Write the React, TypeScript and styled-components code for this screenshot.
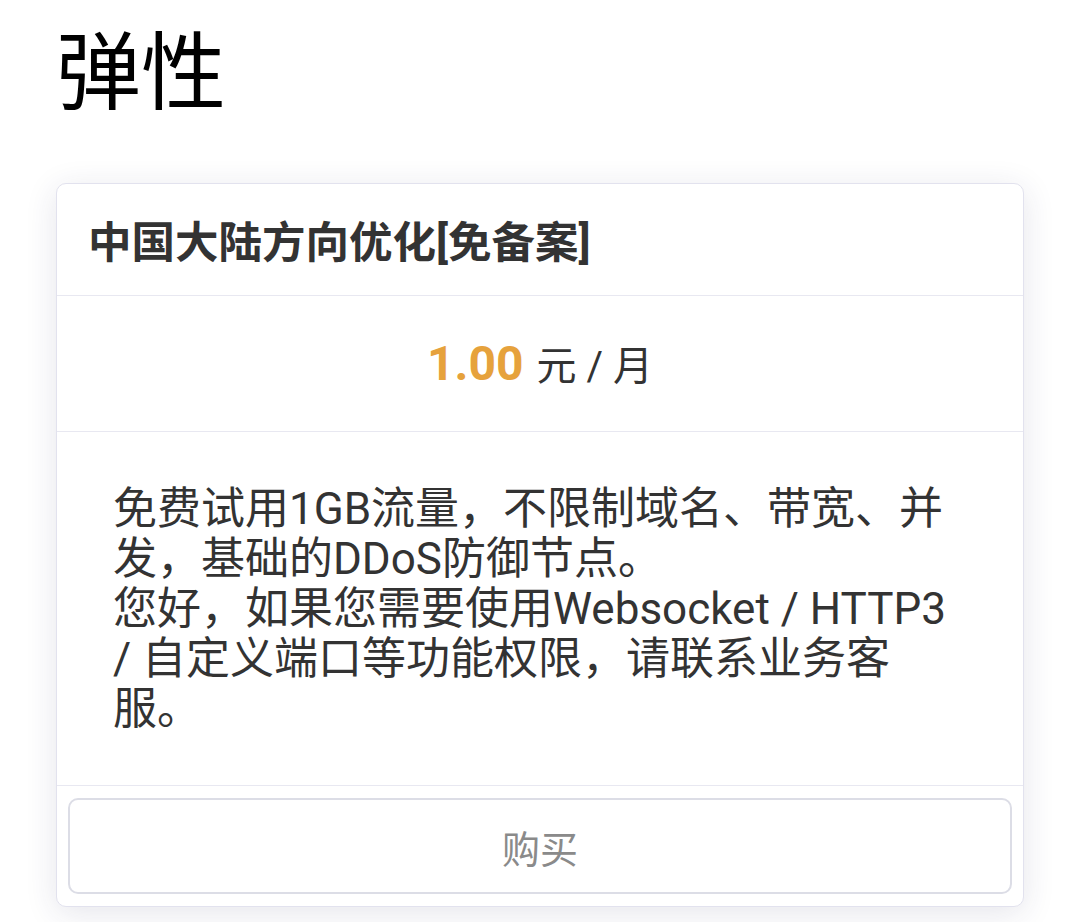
import React from 'react';
import styled, { createGlobalStyle } from 'styled-components';

const GlobalStyle = createGlobalStyle`
  html, body {
    margin: 0;
    padding: 0;
    background: #ffffff;
  }
  body {
    font-family: Roboto, "Noto Sans CJK SC", sans-serif;
    color: #333;
  }
`;

const Page = styled.div`
  padding: 0 56px 16px 56px;
`;

const PageTitle = styled.h1`
  margin: 22px 0 57px 0;
  font-size: 85px;
  line-height: 104px;
  font-weight: 400;
  color: #000;
`;

const PlanCard = styled.div`
  background: #fff;
  border: 1px solid #e2e2ee;
  border-radius: 10px;
  box-shadow: 0 6px 32px rgba(40, 40, 90, 0.12);
  overflow: hidden;
`;

const PlanHeader = styled.div`
  box-sizing: border-box;
  height: 112px;
  padding: 0 31px;
  display: flex;
  align-items: center;
  border-bottom: 1px solid #e8e8f1;
  font-size: 43.5px;
  font-weight: 700;
  color: #333;
`;

const PriceRow = styled.div`
  box-sizing: border-box;
  height: 136px;
  display: flex;
  align-items: baseline;
  justify-content: center;
  padding-top: 38px;
  border-bottom: 1px solid #e8e8f1;
`;

const Amount = styled.span`
  font-size: 48px;
  font-weight: 700;
  color: #e6a23c;
`;

const Unit = styled.span`
  font-size: 40px;
  color: #333;
  margin-left: 13px;
`;

const Description = styled.div`
  padding: 52px 58px 51px 56px;
  font-size: 44px;
  line-height: 50px;
  color: #333;
  border-bottom: 1px solid #e8e8f1;
`;

const Footer = styled.div`
  padding: 12px 11px;
`;

const BuyButton = styled.button`
  display: block;
  width: 100%;
  height: 96px;
  background: #fff;
  border: 2px solid #dcdde6;
  border-radius: 10px;
  font-family: Roboto, "Noto Sans CJK SC", sans-serif;
  font-size: 38px;
  color: #8a8a8a;
  cursor: pointer;

  &:hover {
    background: #f7f8fa;
  }
`;

interface Plan {
  name: string;
  price: string;
  unit: string;
  lines: string[];
}

const plan: Plan = {
  name: '中国大陆方向优化[免备案]',
  price: '1.00',
  unit: '元 / 月',
  lines: [
    '免费试用1GB流量，不限制域名、带宽、并发，基础的DDoS防御节点。',
    '您好，如果您需要使用Websocket / HTTP3 / 自定义端口等功能权限，请联系业务客服。',
  ],
};

const App: React.FC = () => {
  return (
    <>
      <GlobalStyle />
      <Page>
        <PageTitle>弹性</PageTitle>
        <PlanCard>
          <PlanHeader>{plan.name}</PlanHeader>
          <PriceRow>
            <Amount>{plan.price}</Amount>
            <Unit>{plan.unit}</Unit>
          </PriceRow>
          <Description>
            {plan.lines.map((line) => (
              <div key={line}>{line}</div>
            ))}
          </Description>
          <Footer>
            <BuyButton>购买</BuyButton>
          </Footer>
        </PlanCard>
      </Page>
    </>
  );
};

export default App;
